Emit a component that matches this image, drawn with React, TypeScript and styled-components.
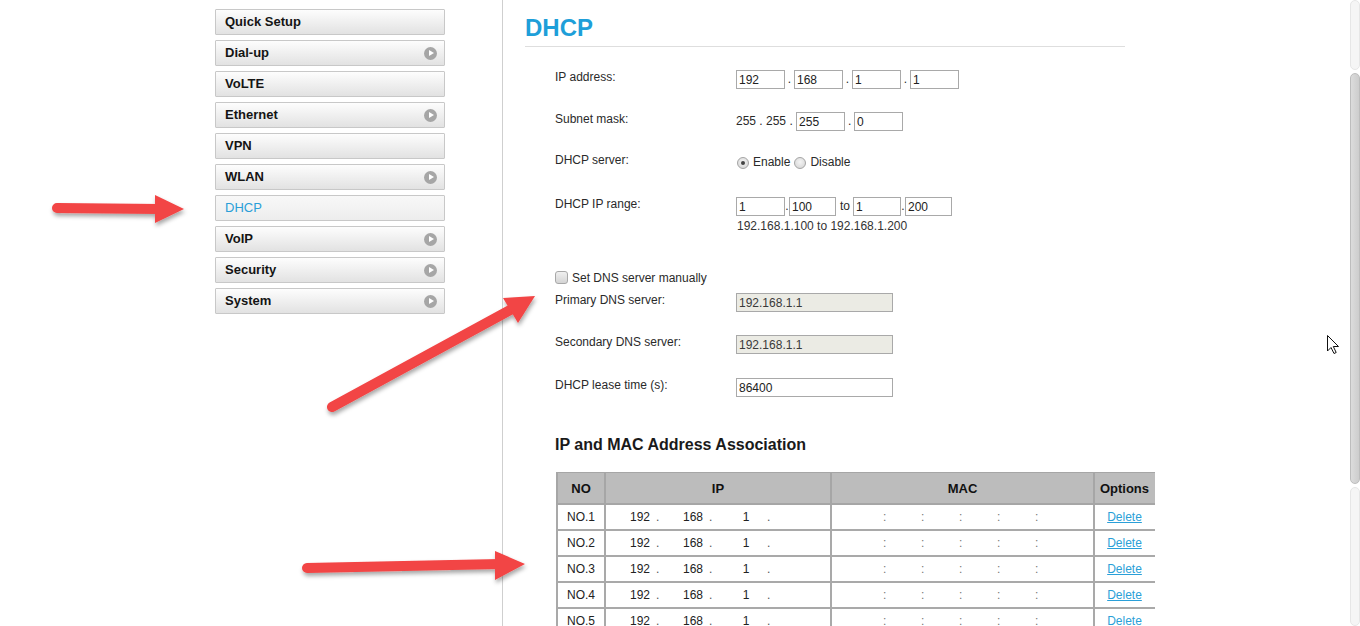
import React from "react";
import styled, { createGlobalStyle } from "styled-components";

const GlobalStyle = createGlobalStyle`
  html, body { margin: 0; padding: 0; background: #fff; overflow: hidden; }
  body { font-family: "Liberation Sans", Arial, sans-serif; color: #222; }
`;

const menu = [
  { label: "Quick Setup", sub: false },
  { label: "Dial-up", sub: true },
  { label: "VoLTE", sub: false },
  { label: "Ethernet", sub: true },
  { label: "VPN", sub: false },
  { label: "WLAN", sub: true },
  { label: "DHCP", sub: false, active: true },
  { label: "VoIP", sub: true },
  { label: "Security", sub: true },
  { label: "System", sub: true },
];

const rows = [1, 2, 3, 4, 5, 6, 7, 8];

const App: React.FC = () => {
  return (
    <>
      <GlobalStyle />
      <StyledScreen>
        <StyledSide>
          {menu.map(m => (
            <StyledMenuItem key={m.label} $active={!!m.active}>
              <span>{m.label}</span>
              {m.sub && <StyledChevron />}
            </StyledMenuItem>
          ))}
        </StyledSide>

        <StyledMain>
          <StyledTitle>DHCP</StyledTitle>
          <StyledForm>
            <StyledRow $mt={23}>
              <StyledLabel>IP address:</StyledLabel>
              <StyledControls>
                <StyledInput defaultValue="192" />
                <StyledDot>.</StyledDot>
                <StyledInput defaultValue="168" />
                <StyledDot>.</StyledDot>
                <StyledInput defaultValue="1" />
                <StyledDot>.</StyledDot>
                <StyledInput defaultValue="1" />
              </StyledControls>
            </StyledRow>

            <StyledRow $mt={23}>
              <StyledLabel>Subnet mask:</StyledLabel>
              <StyledControls>
                <StyledPlain>255 . 255 .&nbsp;</StyledPlain>
                <StyledInput defaultValue="255" />
                <StyledDot>.</StyledDot>
                <StyledInput defaultValue="0" />
              </StyledControls>
            </StyledRow>

            <StyledRow $mt={22}>
              <StyledLabel>DHCP server:</StyledLabel>
              <StyledControls>
                <StyledRadio $checked />
                <StyledPlain>Enable</StyledPlain>
                <StyledRadio />
                <StyledPlain>Disable</StyledPlain>
              </StyledControls>
            </StyledRow>

            <StyledRow $mt={25}>
              <StyledLabel>DHCP IP range:</StyledLabel>
              <div>
                <StyledControls>
                  <StyledInput defaultValue="1" />
                  <StyledSep>.</StyledSep>
                  <StyledInput $w={47} defaultValue="100" />
                  <StyledTo>to</StyledTo>
                  <StyledInput $w={48} defaultValue="1" />
                  <StyledSep>.</StyledSep>
                  <StyledInput $w={47} defaultValue="200" />
                </StyledControls>
                <StyledHint>192.168.1.100 to 192.168.1.200</StyledHint>
              </div>
            </StyledRow>

            <StyledCheckRow>
              <StyledCheckbox />
              <span>Set DNS server manually</span>
            </StyledCheckRow>

            <StyledRow $mt={7}>
              <StyledLabel>Primary DNS server:</StyledLabel>
              <StyledInput $w={157} $disabled defaultValue="192.168.1.1" readOnly />
            </StyledRow>

            <StyledRow $mt={23}>
              <StyledLabel>Secondary DNS server:</StyledLabel>
              <StyledInput $w={157} $disabled defaultValue="192.168.1.1" readOnly />
            </StyledRow>

            <StyledRow $mt={24}>
              <StyledLabel>DHCP lease time (s):</StyledLabel>
              <StyledInput $w={157} defaultValue="86400" />
            </StyledRow>

            <StyledSubTitle>IP and MAC Address Association</StyledSubTitle>

            <StyledTable>
              <colgroup>
                <col style={{ width: 48 }} />
                <col style={{ width: 226 }} />
                <col style={{ width: 263 }} />
                <col style={{ width: 64 }} />
              </colgroup>
              <thead>
                <tr>
                  <StyledTh>NO</StyledTh>
                  <StyledTh>IP</StyledTh>
                  <StyledTh>MAC</StyledTh>
                  <StyledTh>Options</StyledTh>
                </tr>
              </thead>
              <tbody>
                {rows.map(n => (
                  <tr key={n}>
                    <StyledTd $center>NO.{n}</StyledTd>
                    <StyledTd>
                      <StyledIpCell>
                        <StyledOctet>192</StyledOctet>
                        <StyledOctetDot>.</StyledOctetDot>
                        <StyledOctet>168</StyledOctet>
                        <StyledOctetDot>.</StyledOctetDot>
                        <StyledOctet>1</StyledOctet>
                        <StyledOctetDot $wide>.</StyledOctetDot>
                      </StyledIpCell>
                    </StyledTd>
                    <StyledTd>
                      <StyledMacCell>
                        {[0, 1, 2, 3, 4].map(i => (
                          <StyledMacPart key={i}>:</StyledMacPart>
                        ))}
                      </StyledMacCell>
                    </StyledTd>
                    <StyledTd $center>
                      <StyledLink href="#">Delete</StyledLink>
                    </StyledTd>
                  </tr>
                ))}
              </tbody>
            </StyledTable>
          </StyledForm>
        </StyledMain>

        <StyledSpacer />

        <StyledScrollbar>
          <StyledTrack $h={70} />
          <StyledThumb />
          <StyledTrack />
        </StyledScrollbar>

        <StyledOverlay viewBox="0 0 1360 626" width="1360" height="626">
          <defs>
            <filter id="shadow" x="-20%" y="-50%" width="140%" height="200%">
              <feDropShadow dx="1" dy="3" stdDeviation="2" floodColor="#000" floodOpacity="0.35" />
            </filter>
          </defs>
          <g fill="#f24444" stroke="#f24444" filter="url(#shadow)">
            <line x1="57" y1="208" x2="160" y2="209" strokeWidth="10" strokeLinecap="round" />
            <polygon points="155,195 184,209 155,223" stroke="none" />
            <line x1="332" y1="407" x2="512" y2="309" strokeWidth="10" strokeLinecap="round" />
            <polygon points="503,298 535,296 518,323" stroke="none" />
            <line x1="307" y1="568" x2="500" y2="564" strokeWidth="10" strokeLinecap="round" />
            <polygon points="495,551 525,564 495,580" stroke="none" />
          </g>
          <path
            d="M1327.5 335.5 L1327.5 351 L1331 347.5 L1334 353.5 L1336.2 352.5 L1333.3 346.5 L1338.5 346.5 Z"
            fill="#fff"
            stroke="#111"
            strokeWidth="1"
            strokeLinejoin="round"
          />
        </StyledOverlay>
      </StyledScreen>
    </>
  );
};

const StyledScreen = styled.div`
  position: relative;
  width: 1360px; height: 626px; overflow: hidden;
  display: flex; align-items: stretch;
`;

const StyledSide = styled.nav`
  width: 230px; flex-shrink: 0;
  padding: 9px 57px 0 215px;
  display: flex; flex-direction: column; gap: 5px;
`;

const StyledMenuItem = styled.div<{ $active: boolean }>`
  height: 26px; box-sizing: border-box;
  display: flex; align-items: center; justify-content: space-between;
  padding: 0 7px 2px 9px;
  border: 1px solid #c8c8c8; border-radius: 1px;
  background: ${p => (p.$active ? "linear-gradient(#f8f8f8, #ededed)" : "linear-gradient(#fdfdfd, #e2e2e2)")};
  font-size: 13px; font-weight: ${p => (p.$active ? "normal" : "bold")};
  color: ${p => (p.$active ? "#2a9fd8" : "#141414")};
`;

const StyledChevron = styled.span`
  width: 13px; height: 13px; border-radius: 50%;
  background: #a6a6a6; position: relative; margin-top: 2px;
  &::after {
    content: ""; position: absolute; left: 5px; top: 3px;
    border-left: 5px solid #fff; border-top: 3.5px solid transparent; border-bottom: 3.5px solid transparent;
  }
`;

const StyledMain = styled.main`
  width: 630px; flex-shrink: 0;
  border-left: 1px solid #cfcfcf;
  padding-left: 22px;
  overflow: hidden;
`;

const StyledTitle = styled.h1`
  margin: 14px 0 0; width: 600px;
  font-size: 24px; line-height: 28px; font-weight: bold;
  color: #1e9fd9;
  padding-bottom: 4px; border-bottom: 1px solid #dedede;
`;

const StyledForm = styled.div`
  padding-left: 30px;
  font-size: 12px; color: #2a2a2a;
`;

const StyledRow = styled.div<{ $mt: number }>`
  display: flex; align-items: flex-start;
  margin-top: ${p => p.$mt}px;
`;

const StyledLabel = styled.div`
  width: 181px; flex-shrink: 0;
  line-height: 15px;
`;

const StyledControls = styled.div`
  display: flex; align-items: center; height: 19px;
`;

const StyledInput = styled.input<{ $w?: number; $disabled?: boolean }>`
  width: ${p => p.$w ?? 49}px; height: 19px; box-sizing: border-box;
  border: 1px solid #a9a9a9; margin: 0; padding: 0 2px;
  font-family: inherit; font-size: 12px;
  color: ${p => (p.$disabled ? "#3a3a3a" : "#222")};
  background: ${p => (p.$disabled ? "#ebebe4" : "#fff")};
  outline: none;
`;

const StyledDot = styled.span`
  width: 9px; text-align: center; line-height: 19px;
`;

const StyledSep = styled.span`
  width: 4px; text-align: center; line-height: 19px;
`;

const StyledTo = styled.span`
  padding: 0 3px 0 4px; line-height: 19px;
`;

const StyledPlain = styled.span`
  line-height: 19px; white-space: pre;
`;

const StyledRadio = styled.span<{ $checked?: boolean }>`
  width: 12px; height: 12px; box-sizing: border-box; border-radius: 50%;
  border: 1px solid #a4a4a4;
  background: radial-gradient(circle at 50% 40%, #f4f4f4, #d2d2d2);
  margin: 0 4px 0 1px; position: relative;
  &:nth-of-type(3) { margin-left: 4px; }
  &::after {
    content: ""; position: absolute; left: 3px; top: 3px;
    width: 4px; height: 4px; border-radius: 50%;
    background: ${p => (p.$checked ? "#444" : "transparent")};
  }
`;

const StyledHint = styled.div`
  margin-top: 3px; padding-left: 1px; line-height: 14px; color: #333;
`;

const StyledCheckRow = styled.label`
  display: flex; align-items: center; gap: 4px;
  margin-top: 36px; height: 17px;
`;

const StyledCheckbox = styled.span`
  width: 13px; height: 13px; box-sizing: border-box;
  border: 1px solid #a8a8a8; border-radius: 3px;
  background: linear-gradient(#f0f0f0, #d4d4d4);
`;

const StyledSubTitle = styled.h2`
  margin: 39px 0 0; font-size: 16px; line-height: 18px; font-weight: bold; color: #1a1a1a;
`;

const StyledTable = styled.table`
  margin: 18px 0 0 1px;
  border-collapse: collapse; table-layout: fixed; width: 601px;
  font-size: 12px;
`;

const StyledTh = styled.th`
  height: 30px; padding: 0;
  background: #bcbcbc; color: #111;
  border: 2px solid #a6a6a6; border-top-width: 1px;
  font-size: 13px; font-weight: bold;
  &:last-child { border-right: none; padding-right: 4px; }
`;

const StyledTd = styled.td<{ $center?: boolean }>`
  height: 24px; padding: 0;
  border: 2px solid #a9a9a9;
  text-align: ${p => (p.$center ? "center" : "left")};
  color: #222;
  &:last-child { border-right: none; padding-right: 4px; }
`;

const StyledIpCell = styled.div`
  display: flex; padding-left: 19px;
`;

const StyledOctet = styled.span`
  width: 30px; text-align: center;
`;

const StyledOctetDot = styled.span<{ $wide?: boolean }>`
  width: 22px; padding-left: ${p => (p.$wide ? 6 : 1)}px; text-align: left;
  color: #555;
`;

const StyledMacCell = styled.div`
  display: flex; padding-left: 17px; color: #777;
`;

const StyledMacPart = styled.span`
  width: 38px; padding-left: 34px; box-sizing: border-box;
`;

const StyledLink = styled.a`
  color: #2a9fd8; text-decoration: underline;
`;

const StyledSpacer = styled.div`
  flex: 1;
`;

const StyledScrollbar = styled.div`
  width: 10px; flex-shrink: 0;
  display: flex; flex-direction: column; gap: 3px;
`;

const StyledTrack = styled.div<{ $h?: number }>`
  ${p => (p.$h ? `height: ${p.$h}px;` : "flex: 1;")}
  box-sizing: border-box;
  background: #f5f5f5; border: 1px solid #e6e6e6; border-radius: 5px;
`;

const StyledThumb = styled.div`
  height: 411px; box-sizing: border-box;
  background: linear-gradient(90deg, #dcdcdc, #cdcdcd);
  border: 1px solid #bdbdbd; border-radius: 5px;
`;

const StyledOverlay = styled.svg`
  position: absolute; left: 0; top: 0;
  pointer-events: none;
`;

export default App;
